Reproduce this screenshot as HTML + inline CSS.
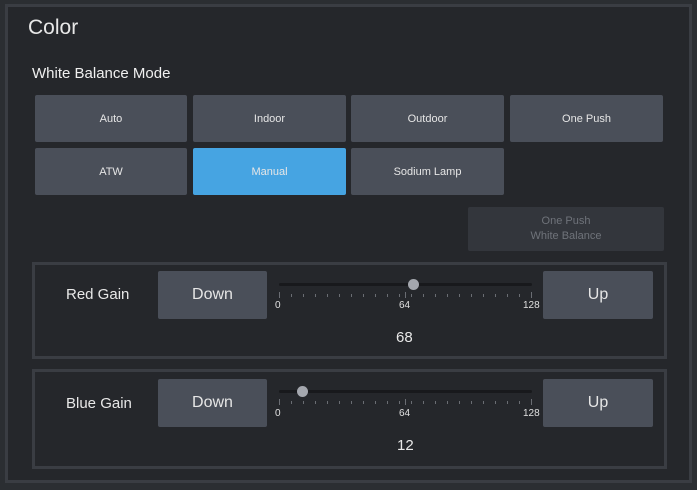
<!DOCTYPE html>
<html><head><style>
*{margin:0;padding:0;box-sizing:border-box}
body{width:697px;height:490px;background:#2b2e32;position:relative;overflow:hidden;font-family:"Liberation Sans",sans-serif;color:#e8e8e8}
.a{position:absolute}
.frame{left:5px;top:4px;width:687px;height:479px;border:3px solid #3a3d43;background:#25272b}
.b{position:absolute;background:#4a4f59;border-radius:2px;color:#e6e6e6;font-size:11px;display:flex;align-items:center;justify-content:center;text-align:center}
.sec{position:absolute;left:32px;width:635px;border:3px solid #3a3d43;background:#25272b}
.big{font-size:16px}
.track{position:absolute;height:3px;background:#18191c;border-radius:2px}
.thumb{position:absolute;width:11px;height:11px;border-radius:50%;background:#a4a7ae}
.lbl{position:absolute;font-size:10px;color:#e0e0e0}
</style></head><body>
<div class="a frame"></div>
<div class="a" style="left:28px;top:16px;font-size:21px;color:#e8e8e8">Color</div>
<div class="a" style="left:32px;top:65px;font-size:15px;color:#f0f0f0">White Balance Mode</div>
<div class="b" style="left:35px;top:95px;width:152px;height:47px">Auto</div>
<div class="b" style="left:193px;top:95px;width:153px;height:47px">Indoor</div>
<div class="b" style="left:351px;top:95px;width:153px;height:47px">Outdoor</div>
<div class="b" style="left:510px;top:95px;width:153px;height:47px">One Push</div>
<div class="b" style="left:35px;top:148px;width:152px;height:47px">ATW</div>
<div class="b" style="left:193px;top:148px;width:153px;height:47px;background:#46a4e2">Manual</div>
<div class="b" style="left:351px;top:148px;width:153px;height:47px">Sodium Lamp</div>
<div class="b" style="left:468px;top:207px;width:196px;height:44px;background:#33363c;color:#6f737a;line-height:15px">One Push<br>White Balance</div>

<div class="sec" style="top:262px;height:97px"></div>
<div class="a" style="left:66px;top:286px;font-size:15px">Red Gain</div>
<div class="b big" style="left:158px;top:271px;width:109px;height:48px">Down</div>
<div class="b big" style="left:543px;top:271px;width:110px;height:48px">Up</div>
<div class="track" style="left:279px;top:283px;width:253px"></div>
<div class="thumb" style="left:408px;top:279px"></div>
<svg class="a" style="left:276px;top:291px" width="262" height="8"><g stroke="#6a6d73" stroke-width="1">
<path d="M3.5 1v6M15.5 3v3M27.5 3v3M39.5 3v3M51.5 3v3M63.5 3v3M75.5 3v3M87.5 3v3M99.5 3v3M111.5 3v3M123.5 3v3M129.5 1v6M135.5 3v3M147.5 3v3M159.5 3v3M171.5 3v3M183.5 3v3M195.5 3v3M207.5 3v3M219.5 3v3M231.5 3v3M243.5 3v3M255.5 1v6"/></g></svg>
<div class="lbl" style="left:275px;top:300px">0</div>
<div class="lbl" style="left:399px;top:300px">64</div>
<div class="lbl" style="left:523px;top:300px">128</div>
<div class="a" style="left:396px;top:329px;font-size:15px">68</div>

<div class="sec" style="top:369px;height:100px"></div>
<div class="a" style="left:66px;top:395px;font-size:15px">Blue Gain</div>
<div class="b big" style="left:158px;top:379px;width:109px;height:48px">Down</div>
<div class="b big" style="left:543px;top:379px;width:110px;height:48px">Up</div>
<div class="track" style="left:279px;top:390px;width:253px"></div>
<div class="thumb" style="left:297px;top:386px"></div>
<svg class="a" style="left:276px;top:398px" width="262" height="8"><g stroke="#6a6d73" stroke-width="1">
<path d="M3.5 1v6M15.5 3v3M27.5 3v3M39.5 3v3M51.5 3v3M63.5 3v3M75.5 3v3M87.5 3v3M99.5 3v3M111.5 3v3M123.5 3v3M129.5 1v6M135.5 3v3M147.5 3v3M159.5 3v3M171.5 3v3M183.5 3v3M195.5 3v3M207.5 3v3M219.5 3v3M231.5 3v3M243.5 3v3M255.5 1v6"/></g></svg>
<div class="lbl" style="left:275px;top:408px">0</div>
<div class="lbl" style="left:399px;top:408px">64</div>
<div class="lbl" style="left:523px;top:408px">128</div>
<div class="a" style="left:397px;top:437px;font-size:15px">12</div>
</body></html>
